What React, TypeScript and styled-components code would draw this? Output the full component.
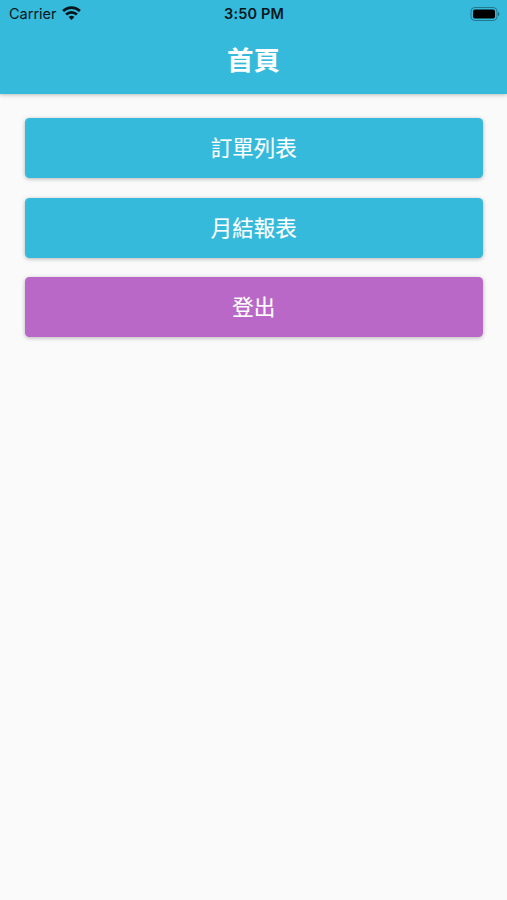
import React from 'react';
import styled, { createGlobalStyle } from 'styled-components';

const GlobalStyle = createGlobalStyle`
  * { box-sizing: border-box; }
  body { margin: 0; background: #fafafa; font-family: Inter, "Noto Sans CJK TC", sans-serif; }
`;

const Screen = styled.div`
  min-height: 900px;
  background: #fafafa;
`;

const Header = styled.header`
  height: 94px;
  background: #36badb;
  box-shadow: 0 1px 4px rgba(0, 0, 0, 0.26);
`;

const StatusBar = styled.div`
  height: 27px;
  display: grid;
  grid-template-columns: 1fr auto 1fr;
  align-items: center;
  padding: 0 7px 0 9px;
  font-size: 14.5px;
  line-height: 27px;
  color: #06171c;
`;

const Carrier = styled.div`
  display: flex;
  align-items: center;
  gap: 5px;
`;

const WifiIcon = styled.svg`
  display: block;
  margin-bottom: 1px;
`;

const Time = styled.div`
  margin-right: 1px;
  font-weight: 600;
  font-size: 14.5px;
  letter-spacing: 0.15px;
`;

const BatterySlot = styled.div`
  display: flex;
  justify-content: flex-end;
`;

const Title = styled.h1`
  margin: 0;
  height: 67px;
  line-height: 64px;
  text-align: center;
  color: #fff;
  font-family: "Noto Sans CJK TC", sans-serif;
  font-size: 26.5px;
  font-weight: 700;
`;

const Menu = styled.main`
  display: flex;
  flex-direction: column;
  gap: 19.5px;
  padding: 24px 24.5px 0 25px;
`;

const MenuButton = styled.button<{ $color: string }>`
  height: 60px;
  padding: 0 0 2px;
  border: 0;
  border-radius: 4.5px;
  background: ${(p) => p.$color};
  color: #fff;
  font: 400 21.5px/58px "Noto Sans CJK TC", sans-serif;
  -webkit-text-stroke: 0.15px #fff;
  box-shadow: 0 1px 4px rgba(0, 0, 0, 0.28);
`;

export default function App() {
  return (
    <Screen>
      <GlobalStyle />
      <Header>
        <StatusBar>
          <Carrier>
            Carrier
            <WifiIcon width="19" height="14" viewBox="0 0 19 14" fill="none" stroke="#06171c" strokeWidth="2.7">
              <path d="M1.1 5 A12 12 0 0 1 17.9 5" />
              <path d="M4.1 8.5 A7.7 7.7 0 0 1 14.9 8.5" />
              <path d="M9.5 14 L6.6 11.1 A4.1 4.1 0 0 1 12.4 11.1 Z" fill="#06171c" stroke="none" />
            </WifiIcon>
          </Carrier>
          <Time>3:50 PM</Time>
          <BatterySlot>
            <svg width="30" height="14" viewBox="0 0 30 14">
              <rect x="1" y="0.5" width="26" height="13" rx="3.8" fill="none" stroke="#06171c" strokeOpacity="0.4" />
              <rect x="3" y="2.5" width="22" height="9" rx="2" fill="#000" />
              <path d="M28 4.8 Q29.5 5.6 29.5 7 Q29.5 8.4 28 9.2 Z" fill="#06171c" fillOpacity="0.45" />
            </svg>
          </BatterySlot>
        </StatusBar>
        <Title>首頁</Title>
      </Header>
      <Menu>
        <MenuButton $color="#36badb">訂單列表</MenuButton>
        <MenuButton $color="#36badb">月結報表</MenuButton>
        <MenuButton $color="#b968c7">登出</MenuButton>
      </Menu>
    </Screen>
  );
}
